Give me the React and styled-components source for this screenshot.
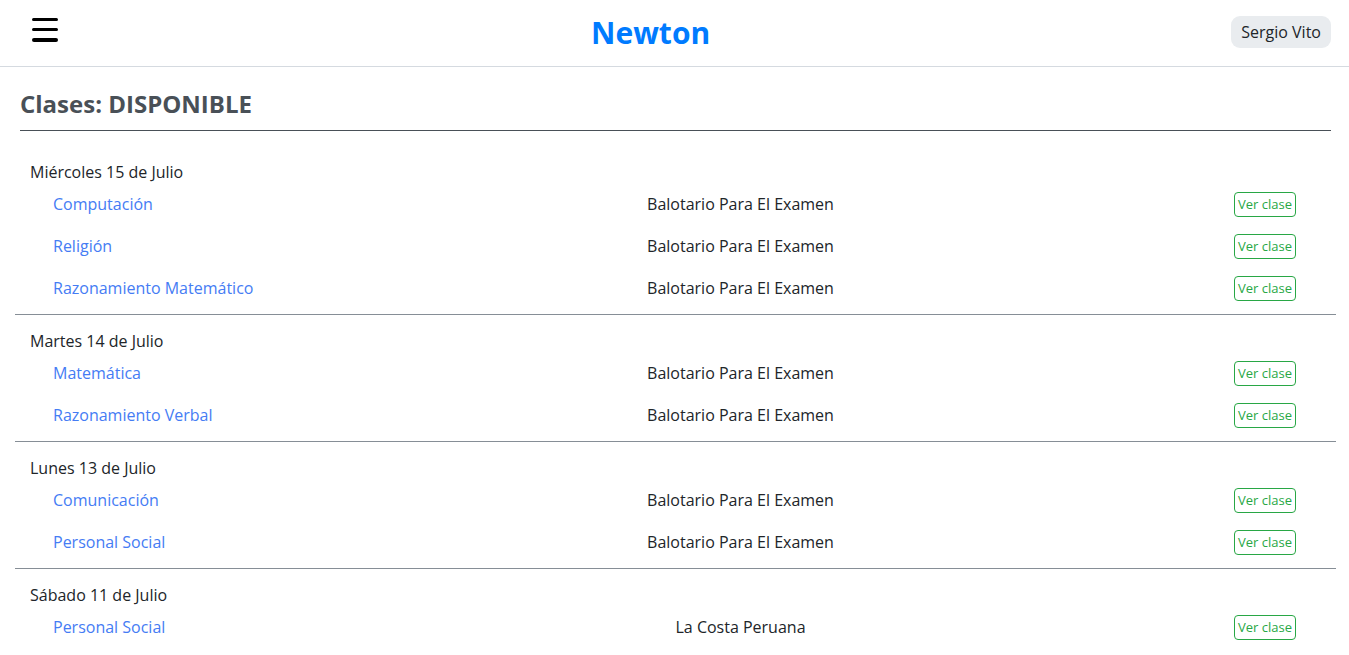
import React from "react";
import styled, { createGlobalStyle } from "styled-components";

const GlobalStyle = createGlobalStyle`
  * {
    box-sizing: border-box;
  }

  body {
    margin: 0;
    font-family: "Open Sans", "Liberation Sans", sans-serif;
    font-size: 16px;
    color: #212529;
    background: #fff;
  }
`;

const Header = styled.header`
  height: 67px;
  display: flex;
  justify-content: space-between;
  align-items: center;
  padding: 0 18px 0 20px;
  border-bottom: 1px solid #d5dae0;
`;

const MenuButton = styled.button`
  width: 50px;
  height: 24px;
  padding: 0 12px;
  margin-top: -7px;
  border: none;
  background: none;
  display: flex;
  flex-direction: column;
  justify-content: space-between;
  cursor: pointer;
`;

const MenuLine = styled.span`
  display: block;
  height: 3.5px;
  border-radius: 2px;
  background: #000;
`;

const Brand = styled.a`
  font-size: 30px;
  font-weight: 700;
  color: #007bff;
  text-decoration: none;
  margin-top: -2px;
`;

const UserPill = styled.span`
  height: 32px;
  margin-top: -2px;
  padding: 0 10px;
  display: flex;
  align-items: center;
  border-radius: 9px;
  background: #e9ecef;
  font-size: 16px;
`;

const Main = styled.main`
  padding: 0 18px 0 20px;
`;

const Title = styled.h4`
  margin: 23px 0 0;
  font-size: 24px;
  font-weight: 700;
  line-height: 1.2;
  color: #495057;
`;

const Rule = styled.hr`
  margin: 11px 0 15px;
  border: 0;
  border-top: 1px solid #495057;
`;

const Group = styled.section`
  margin: 0 -5px;
  padding: 15px 0 5px;
  border-bottom: ${(p) => (p.$last ? "none" : "1px solid #868e96")};
`;

const DateLabel = styled.div`
  padding-left: 15px;
  line-height: 22px;
`;

const ClassRow = styled.div`
  height: 42px;
  display: grid;
  grid-template-columns: 300px 1fr 168px;
  align-items: center;
  padding: 0 40px 0 38px;
`;

const Subject = styled.a`
  color: #457cf4;
  text-decoration: none;
  white-space: nowrap;
`;

const Topic = styled.span`
  text-align: center;
  white-space: nowrap;
`;

const ViewButton = styled.button`
  justify-self: end;
  height: 25px;
  margin-top: 1px;
  padding: 0 3px;
  border: 1px solid #28a745;
  border-radius: 4px;
  background: #fff;
  color: #28a745;
  font-family: "Open Sans", "Liberation Sans", sans-serif;
  font-size: 13px;
  line-height: 23px;
  cursor: pointer;
`;

const groups = [
  {
    date: "Miércoles 15 de Julio",
    classes: [
      { subject: "Computación", topic: "Balotario Para El Examen" },
      { subject: "Religión", topic: "Balotario Para El Examen" },
      { subject: "Razonamiento Matemático", topic: "Balotario Para El Examen" },
    ],
  },
  {
    date: "Martes 14 de Julio",
    classes: [
      { subject: "Matemática", topic: "Balotario Para El Examen" },
      { subject: "Razonamiento Verbal", topic: "Balotario Para El Examen" },
    ],
  },
  {
    date: "Lunes 13 de Julio",
    classes: [
      { subject: "Comunicación", topic: "Balotario Para El Examen" },
      { subject: "Personal Social", topic: "Balotario Para El Examen" },
    ],
  },
  {
    date: "Sábado 11 de Julio",
    classes: [{ subject: "Personal Social", topic: "La Costa Peruana" }],
  },
];

export default function App() {
  return (
    <>
      <GlobalStyle />
      <Header>
        <MenuButton aria-label="Menú">
          <MenuLine />
          <MenuLine />
          <MenuLine />
        </MenuButton>
        <Brand href="#">Newton</Brand>
        <UserPill>Sergio Vito</UserPill>
      </Header>
      <Main>
        <Title>Clases: DISPONIBLE</Title>
        <Rule />
        {groups.map((g, i) => (
          <Group key={g.date} $last={i === groups.length - 1}>
            <DateLabel>{g.date}</DateLabel>
            {g.classes.map((c) => (
              <ClassRow key={c.subject}>
                <Subject href="#">{c.subject}</Subject>
                <Topic>{c.topic}</Topic>
                <ViewButton>Ver clase</ViewButton>
              </ClassRow>
            ))}
          </Group>
        ))}
      </Main>
    </>
  );
}
